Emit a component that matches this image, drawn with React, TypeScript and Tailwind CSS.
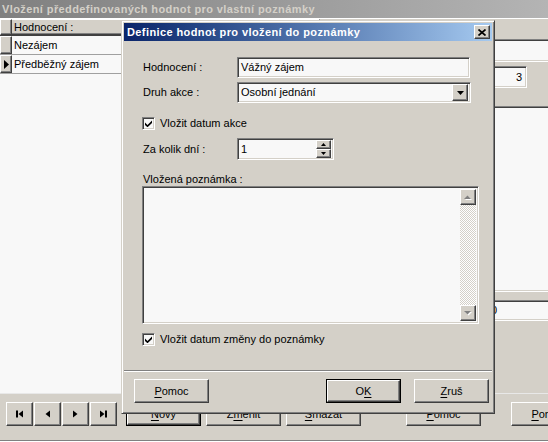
import React from "react";

const raised =
  "bg-[#d4d0c8] border border-t-white border-l-white border-r-[#404040] border-b-[#404040] shadow-[inset_-1px_-1px_0_0_#808080]";
const sunken =
  "bg-[#f8f8f8] border border-t-[#808080] border-l-[#808080] border-r-white border-b-white shadow-[inset_1px_1px_0_0_#404040,inset_-1px_-1px_0_0_#d4d0c8]";

function Label({ text, u }: { text: string; u: number }) {
  return (
    <span>
      {text.slice(0, u)}
      <span className="underline underline-offset-2">{text[u]}</span>
      {text.slice(u + 1)}
    </span>
  );
}

function Button({
  text,
  u,
  def,
  className = "",
}: {
  text: string;
  u: number;
  def?: boolean;
  className?: string;
}) {
  if (def) {
    return (
      <div className={`border border-black flex shrink-0 ${className}`}>
        <div className={`${raised} flex-1 flex items-center justify-center`}>
          <Label text={text} u={u} />
        </div>
      </div>
    );
  }
  return (
    <div className={`${raised} flex items-center justify-center shrink-0 ${className}`}>
      <Label text={text} u={u} />
    </div>
  );
}

function Check({ text }: { text: string }) {
  return (
    <div className="flex items-center h-[13px]">
      <div className={`${sunken} w-[13px] h-[13px] flex items-center justify-center shrink-0`}>
        <svg width="7" height="7" viewBox="0 0 7 7">
          <polygon points="0,2.5 2.5,5 7,0.5 7,3 2.5,7.3 0,5" fill="#000" />
        </svg>
      </div>
      <span className="ml-[5px]">{text}</span>
    </div>
  );
}

function NavIcon({ kind }: { kind: "first" | "prev" | "next" | "last" }) {
  return (
    <svg width="9" height="8" viewBox="0 0 9 8">
      {kind === "first" && (
        <>
          <rect x="1" y="0.5" width="2" height="7" fill="#000" />
          <polygon points="8,0.5 8,7.5 3.5,4" fill="#000" />
        </>
      )}
      {kind === "prev" && <polygon points="7,0.5 7,7.5 2.5,4" fill="#000" />}
      {kind === "next" && <polygon points="2,0.5 2,7.5 6.5,4" fill="#000" />}
      {kind === "last" && (
        <>
          <polygon points="1,0.5 1,7.5 5.5,4" fill="#000" />
          <rect x="6" y="0.5" width="2" height="7" fill="#000" />
        </>
      )}
    </svg>
  );
}

function ScrollArrow({ up }: { up?: boolean }) {
  return (
    <div className={`${raised} w-[16px] h-[16px] flex items-center justify-center`}>
      <svg width="8" height="5" viewBox="0 0 8 5">
        {up ? (
          <>
            <polygon points="1,5 8,5 4.5,1.5" fill="#fff" />
            <polygon points="0,4 7,4 3.5,0.5" fill="#808080" />
          </>
        ) : (
          <>
            <polygon points="1,1 8,1 4.5,4.5" fill="#fff" />
            <polygon points="0,0 7,0 3.5,3.5" fill="#808080" />
          </>
        )}
      </svg>
    </div>
  );
}

function Dialog() {
  return (
    <div className="absolute left-[121px] top-[20px] w-[374px] h-[394px] bg-[#d4d0c8] border border-t-[#d4d0c8] border-l-[#d4d0c8] border-r-[#404040] border-b-[#404040] shadow-[inset_1px_1px_0_0_#fff,inset_-1px_-1px_0_0_#808080] p-[2px] flex flex-col">
      <div className="h-[18px] shrink-0 flex items-center justify-between pl-[3px] pr-[2px] bg-gradient-to-r from-[#0a246a] to-[#a6caf0]">
        <span className="text-white font-bold tracking-[0.4px]">Definice hodnot pro vložení do poznámky</span>
        <div className={`${raised} w-[16px] h-[14px] flex items-center justify-center`}>
          <svg width="8" height="7" viewBox="0 0 8 7">
            <path d="M0.5 0.5L7.5 6.5M7.5 0.5L0.5 6.5" stroke="#000" strokeWidth="1.7" />
          </svg>
        </div>
      </div>

      <div className="flex flex-col pl-[18px]">
        <div className="mt-[16px] flex items-center h-[21px]">
          <span className="w-[95px] pl-[1px]">Hodnocení :</span>
          <div className={`${sunken} w-[233px] h-[21px] flex items-center pl-[3px]`}>Vážný zájem</div>
        </div>
        <div className="mt-[4px] flex items-center h-[21px]">
          <span className="w-[95px] pl-[1px]">Druh akce :</span>
          <div className={`${sunken} w-[234px] h-[21px] flex items-center justify-between pl-[3px] pr-[2px]`}>
            <span>Osobní jednání</span>
            <div className={`${raised} w-[16px] h-[17px] flex items-center justify-center`}>
              <svg width="7" height="4" viewBox="0 0 7 4">
                <polygon points="0,0 7,0 3.5,4" fill="#000" />
              </svg>
            </div>
          </div>
        </div>
        <div className="mt-[14px]">
          <Check text="Vložit datum akce" />
        </div>
        <div className="mt-[8px] flex items-center h-[22px]">
          <span className="w-[95px] pl-[1px]">Za kolik dní :</span>
          <div className={`${sunken} w-[97px] h-[22px] flex items-center justify-between pl-[3px] pr-[2px]`}>
            <span>1</span>
            <div className="flex flex-col w-[15px] h-[18px]">
              <div className={`${raised} flex-1 flex items-center justify-center`}>
                <svg width="5" height="3" viewBox="0 0 5 3">
                  <polygon points="0,3 5,3 2.5,0" fill="#000" />
                </svg>
              </div>
              <div className={`${raised} flex-1 flex items-center justify-center`}>
                <svg width="5" height="3" viewBox="0 0 5 3">
                  <polygon points="0,0 5,0 2.5,3" fill="#000" />
                </svg>
              </div>
            </div>
          </div>
        </div>
        <span className="mt-[13px] h-[13px] leading-[13px] pl-[1px]">Vložená poznámka :</span>
        <div className={`${sunken} w-[337px] h-[138px] flex justify-end p-[2px]`}>
          <div className="w-[16px] flex flex-col bg-[image:repeating-conic-gradient(#d4d0c8_0%_25%,#ffffff_0%_50%)] bg-[length:2px_2px]">
            <ScrollArrow up />
            <div className="flex-1" />
            <ScrollArrow />
          </div>
        </div>
        <div className="mt-[9px]">
          <Check text="Vložit datum změny do poznámky" />
        </div>
      </div>

      <div className="mt-[24px] h-[2px] border-t border-t-[#808080] border-b border-b-white" />

      <div className="mt-[7px] flex h-[24px]">
        <Button text="Pomoc" u={0} className="ml-[10px] w-[75px]" />
        <Button text="OK" u={1} def className="ml-[117px] w-[75px]" />
        <Button text="Zruš" u={0} className="ml-[13px] w-[75px]" />
      </div>
    </div>
  );
}

export default function App() {
  const rows = ["Nezájem", "Předběžný zájem"];
  return (
    <div className="relative w-[548px] h-[442px] overflow-hidden bg-[#d4d0c8] text-[11px] text-black font-['Liberation_Sans',Arial,sans-serif] flex flex-col">
      <div className="h-[18px] shrink-0 flex items-center pl-[2px] bg-gradient-to-r from-[#808080] to-[#b4b4b4]">
        <span className="font-bold tracking-[0.4px] text-[#d4d0c8]">Vložení předdefinovaných hodnot pro vlastní poznámky</span>
      </div>
      <div className="h-[1px] bg-white" />

      <div className="flex h-[374px]">
        {/* datasheet */}
        <div className="w-[320px] bg-[#f8f8f8] flex flex-col">
          <div className="flex h-[17px] border-b border-b-[#404040]">
            <div className={`${raised} w-[12px] border-r-[#000]`} />
            <div className={`${raised} flex-1 flex items-center pl-[2px] border-l-0`}>Hodnocení :</div>
          </div>
          {rows.map((r, i) => (
            <div key={r} className="flex h-[19px] border-b border-b-[#a0a0a0]">
              <div className={`${raised} w-[12px] border-r-[#000] flex items-center justify-center`}>
                {i === 1 && (
                  <svg width="5" height="9" viewBox="0 0 5 9">
                    <polygon points="0,0 0,9 5,4.5" fill="#000" />
                  </svg>
                )}
              </div>
              <div className="flex-1 flex items-center pl-[2px]">{r}</div>
            </div>
          ))}
        </div>

        {/* record form */}
        <div className="flex-1 flex flex-col pl-[10px] -mr-[4px]">
          <div className={`${sunken} mt-[20px] h-[23px]`} />
          <div className="flex justify-end pr-[25px]">
            <div className={`${sunken} mt-[4px] w-[60px] h-[22px] flex items-center justify-end pr-[4px]`}>3</div>
          </div>
          <div className={`${sunken} mt-[18px] h-[186px]`} />
          <div className={`${sunken} mt-[8px] h-[21px] ml-[157px] flex items-center pl-[3px]`}>0</div>
        </div>
      </div>

      <div className="h-[1px] bg-[#e8e8e8]" />

      <div className="flex pt-[8px] pl-[6px] h-[46px]">
        <div className="flex gap-[1px] h-[24px] shrink-0">
          {(["first", "prev", "next", "last"] as const).map((k) => (
            <div key={k} className={`${raised} w-[27px] flex items-center justify-center`}>
              <NavIcon kind={k} />
            </div>
          ))}
        </div>
        <Button text="Nový" u={0} def className="ml-[9px] w-[75px] h-[24px]" />
        <Button text="Změnit" u={1} className="ml-[5px] w-[75px] h-[24px]" />
        <Button text="Smazat" u={0} className="ml-[5px] w-[75px] h-[24px]" />
        <Button text="Pomoc" u={0} className="ml-[45px] w-[75px] h-[24px]" />
        <Button text="Pomoc" u={0} className="ml-[30px] w-[75px] h-[24px]" />
      </div>
      <div className="h-[1px] bg-[#808080]" />
      <div className="h-[1px] bg-white" />

      <Dialog />
    </div>
  );
}
